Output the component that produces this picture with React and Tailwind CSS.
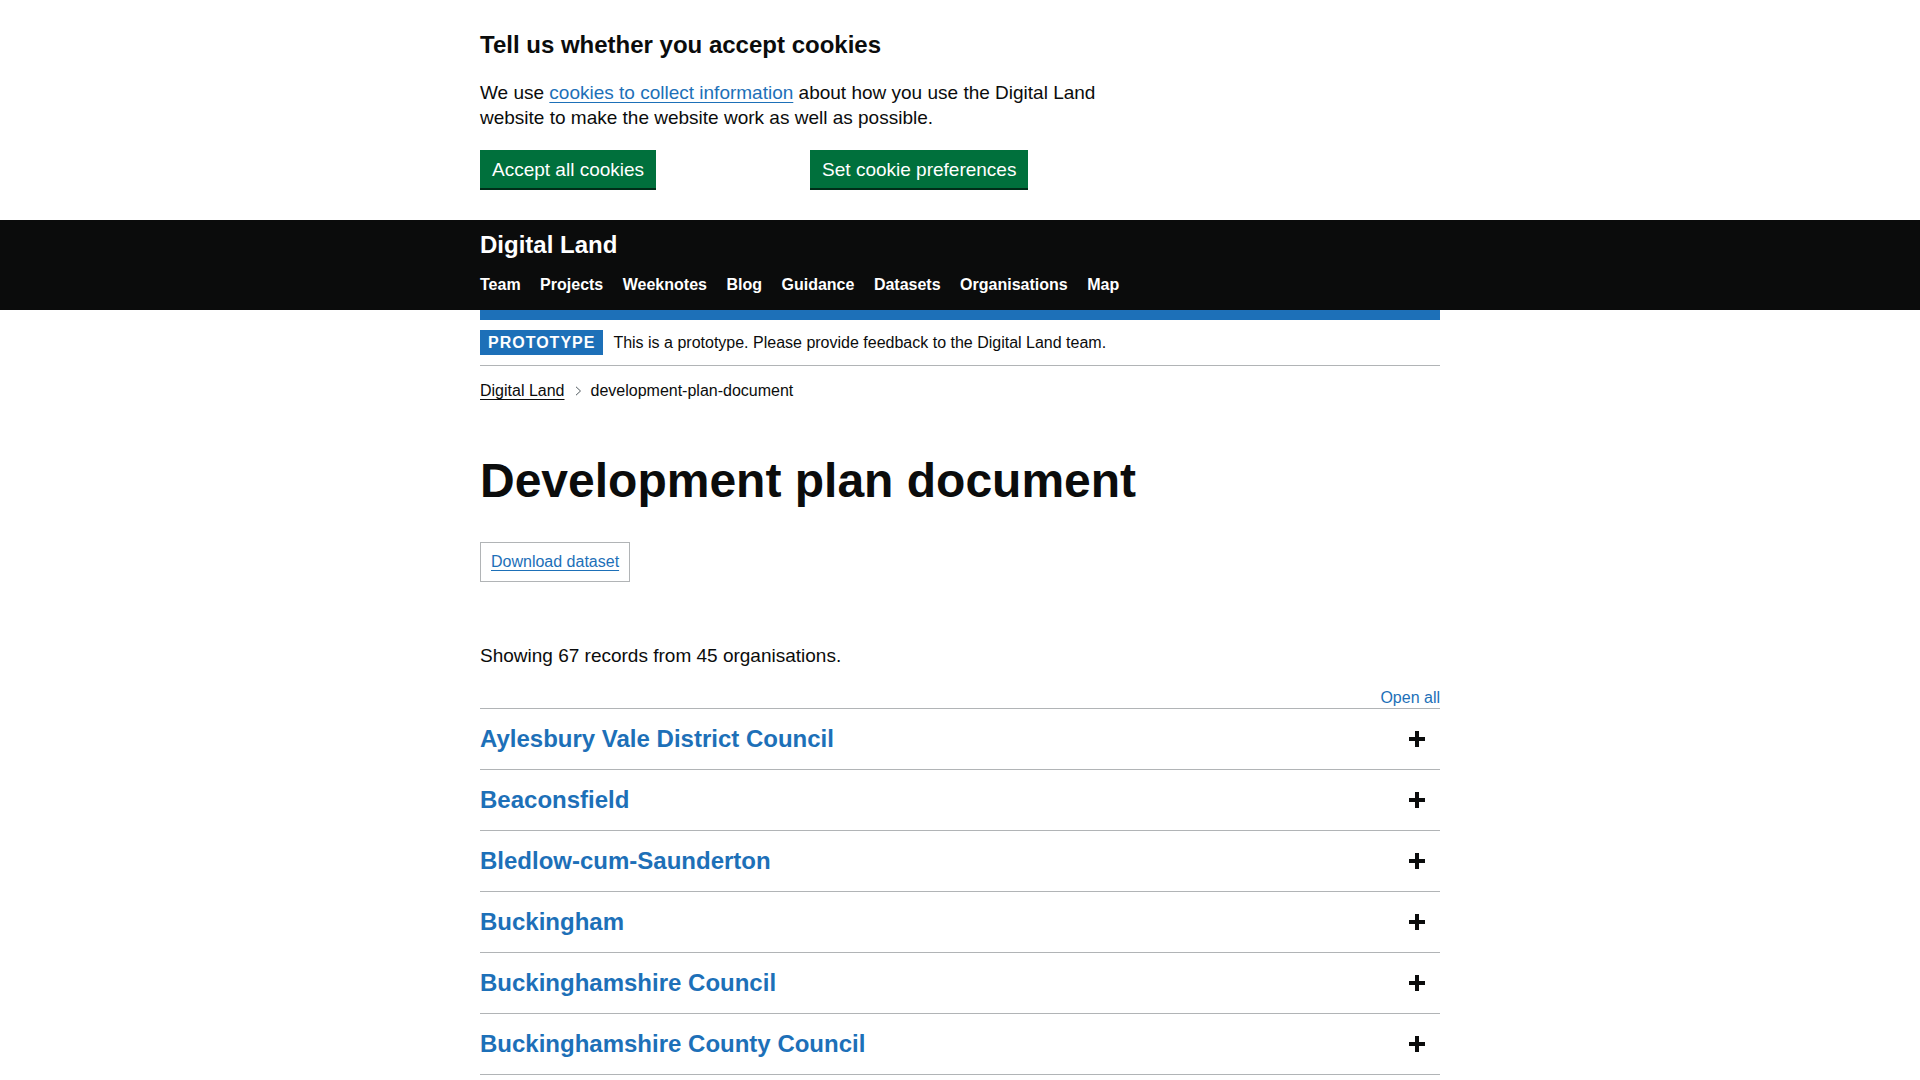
const navItems = ["Team", "Projects", "Weeknotes", "Blog", "Guidance", "Datasets", "Organisations", "Map"];

const organisations = [
  "Aylesbury Vale District Council",
  "Beaconsfield",
  "Bledlow-cum-Saunderton",
  "Buckingham",
  "Buckinghamshire Council",
  "Buckinghamshire County Council",
  "Burnham",
  "Chalfont St Giles",
];

const PlusIcon = () => (
  <svg width="16" height="16" viewBox="0 0 16 16" className="mr-[15px] shrink-0" fill="#0b0c0c">
    <rect x="0" y="6" width="16" height="4" />
    <rect x="6" y="0" width="4" height="16" />
  </svg>
);

const Chevron = () => (
  <svg width="7" height="10" viewBox="0 0 7 10" className="ml-[10px] mr-[9px]" fill="none" stroke="#505a5f" strokeWidth="1">
    <path d="M1 0.8 L5.5 5 L1 9.2" />
  </svg>
);

const CookieBanner = () => (
  <div className="w-[960px] mx-auto pt-[30px] pb-[32px]">
    <h2 className="text-[24px] leading-[30px] font-bold mb-[20px]">Tell us whether you accept cookies</h2>
    <p className="text-[19px] leading-[25px] mb-[20px] w-[630px]">
      We use{" "}
      <a href="#" className="text-[#1d70b8] underline underline-offset-[3px] decoration-1">
        cookies to collect information
      </a>{" "}
      about how you use the Digital Land website to make the website work as well as possible.
    </p>
    <div className="flex">
      <button className="bg-[#00703c] text-white text-[19px] leading-[19px] pt-[8px] pb-[7px] px-[10px] border-2 border-transparent shadow-[0_2px_0_#002d18]">
        Accept all cookies
      </button>
      <button className="ml-[154px] bg-[#00703c] text-white text-[19px] leading-[19px] pt-[8px] pb-[7px] px-[10px] border-2 border-transparent shadow-[0_2px_0_#002d18]">
        Set cookie preferences
      </button>
    </div>
  </div>
);

const Header = () => (
  <>
    <header className="bg-[#0b0c0c] text-white">
      <div className="w-[960px] mx-auto pt-[10px] pb-[15px]">
        <a href="#" className="block text-[24px] leading-[30px] font-bold">Digital Land</a>
        <nav className="mt-[15px] flex gap-[19.5px] text-[16px] leading-[20px] font-bold">
          {navItems.map((item) => (
            <a key={item} href="#">{item}</a>
          ))}
        </nav>
      </div>
    </header>
    <div className="w-[960px] mx-auto h-[10px] bg-[#1d70b8]" />
  </>
);

export default function App() {
  return (
    <div className="min-h-screen bg-white text-[#0b0c0c] font-['Liberation_Sans',Arial,sans-serif]">
      <CookieBanner />
      <Header />
      <div className="w-[960px] mx-auto">
        <div className="flex items-center py-[10px] border-b border-[#b1b4b6]">
          <strong className="bg-[#1d70b8] text-white font-bold text-[16px] leading-[16px] tracking-[1px] pt-[5px] pb-[4px] px-[8px] mr-[10px]">
            PROTOTYPE
          </strong>
          <span className="text-[16px] leading-[20px]">
            This is a prototype. Please provide feedback to the Digital Land team.
          </span>
        </div>

        <div className="mt-[15px] mb-[10px] flex items-center text-[16px] leading-[20px]">
          <a href="#" className="underline underline-offset-[3px] decoration-1">Digital Land</a>
          <Chevron />
          <span>development-plan-document</span>
        </div>

        <main className="pt-[45px] pb-[60px]">
          <h1 className="text-[48px] leading-[50px] font-bold">Development plan document</h1>

          <div className="mt-[36px]">
            <div className="inline-block border border-[#b1b4b6] px-[10px] py-[9px] text-[16px] leading-[20px]">
              <a href="#" className="text-[#1d70b8] underline underline-offset-[3px] decoration-1">Download dataset</a>
            </div>
          </div>

          <p className="mt-[61px] text-[19px] leading-[25px]">Showing 67 records from 45 organisations.</p>

          <div className="mt-[20px] text-right text-[16px] leading-[20px]">
            <button className="text-[#1d70b8]">Open all</button>
          </div>

          <div className="border-t border-[#b1b4b6]">
            {organisations.map((org) => (
              <div key={org} className="flex items-center justify-between py-[15px] border-b border-[#b1b4b6]">
                <h2 className="text-[24px] leading-[30px] font-bold text-[#1d70b8]">{org}</h2>
                <PlusIcon />
              </div>
            ))}
          </div>
        </main>
      </div>
    </div>
  );
}
